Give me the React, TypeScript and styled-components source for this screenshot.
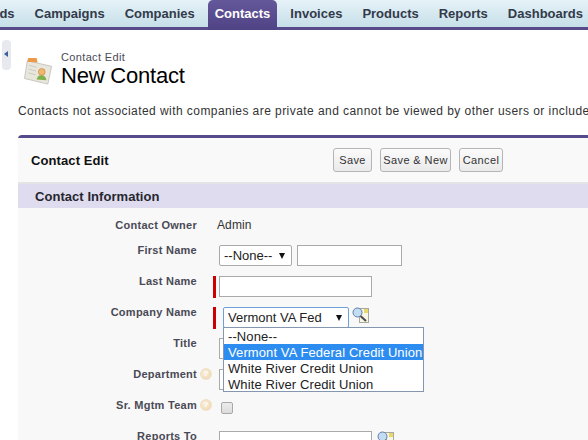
import React from "react";
import styled, { createGlobalStyle } from "styled-components";

const Global = createGlobalStyle`
  html, body { margin: 0; padding: 0; background: #fff; overflow: hidden; }
  body { font-family: "Liberation Sans", Arial, sans-serif; }
`;

const Page = styled.div`
  width: 588px;
  height: 440px;
  overflow: hidden;
  background: #fff;
  color: #222;
`;

const TabBar = styled.nav`
  display: flex;
  gap: 6px;
  height: 27px;
  margin-left: -30px;
  width: 640px;
  background: linear-gradient(#e6f2f8, #c6dfe8);
  border-bottom: 3px solid #574a8a;
`;

const Tab = styled.div<{ $active?: boolean }>`
  height: ${(p) => (p.$active ? "30px" : "27px")};
  padding: 0 7px;
  border-radius: 5px 5px 0 0;
  font-size: 13px;
  font-weight: bold;
  line-height: 27px;
  white-space: nowrap;
  color: ${(p) => (p.$active ? "#fff" : "#333a4a")};
  background: ${(p) => (p.$active ? "linear-gradient(#65589a, #504385)" : "none")};
`;

const Body = styled.main`
  display: flex;
  flex-direction: column;
  padding-left: 18px;
  position: relative;
`;

const Handle = styled.div`
  position: absolute;
  left: 2px;
  top: 10px;
  width: 9px;
  height: 30px;
  border-radius: 4px;
  background: #e7e9ee;
  &::after {
    content: "";
    position: absolute;
    left: 2px;
    top: 11px;
    border: 3px solid transparent;
    border-left: 0;
    border-right: 4px solid #3c5f94;
  }
`;

const TitleRow = styled.header`
  display: flex;
  align-items: flex-start;
  gap: 8px;
  padding: 20px 0 0 6px;
  height: 54px;
  box-sizing: content-box;
`;

const TitleText = styled.div`
  display: flex;
  flex-direction: column;
`;

const Crumb = styled.div`
  font-size: 11px;
  line-height: 14px;
  color: #4a4a56;
  letter-spacing: 0.35px;
`;

const Heading = styled.h1`
  margin: 0;
  font-size: 22px;
  font-weight: normal;
  line-height: 24px;
  color: #000;
  letter-spacing: -0.2px;
`;

const Note = styled.p`
  margin: 0;
  height: 31px;
  font-size: 12px;
  line-height: 14px;
  letter-spacing: 0.44px;
  white-space: nowrap;
  color: #333;
`;

const Panel = styled.section`
  position: relative;
  width: 620px;
  height: 310px;
  background: #f8f8f8;
  border-top: 3px solid #574a8a;
  border-radius: 4px 0 0 0;
`;

const PanelHead = styled.div`
  display: flex;
  align-items: center;
  height: 44px;
  padding-left: 13px;
  border-bottom: 2px solid #e4e4e6;
  background: #f9f9f9;
`;

const PanelTitle = styled.h2`
  margin: 0;
  width: 302px;
  font-size: 13px;
  font-weight: bold;
  letter-spacing: 0.1px;
  color: #111;
`;

const Buttons = styled.div`
  display: flex;
  gap: 8px;
`;

const Button = styled.button<{ $w: number }>`
  width: ${(p) => p.$w}px;
  height: 24px;
  padding: 0;
  font-family: inherit;
  font-size: 11px;
  font-weight: normal;
  letter-spacing: 0.4px;
  color: #333;
  background: linear-gradient(#fbfbfb, #eaeaea);
  border: 1px solid #b5b5b5;
  border-radius: 3px;
`;

const SectionHead = styled.h3`
  margin: 0;
  height: 24px;
  padding-left: 17px;
  background: #e0dcf0;
  font-size: 13px;
  font-weight: bold;
  line-height: 26px;
  letter-spacing: 0.05px;
  color: #26262e;
`;

const Row = styled.div<{ $h?: number }>`
  display: flex;
  align-items: flex-start;
  height: ${(p) => p.$h ?? 31}px;
`;

const Label = styled.label<{ $top?: number }>`
  display: flex;
  justify-content: flex-end;
  align-items: center;
  gap: 3px;
  width: 179px;
  flex: none;
  height: 14px;
  margin-top: ${(p) => p.$top ?? 7}px;
  font-size: 11px;
  font-weight: bold;
  letter-spacing: 0.27px;
  color: #4a4a56;
  white-space: nowrap;
`;

const Help = styled.span`
  flex: none;
  width: 12px;
  height: 12px;
  margin-right: -15px;
  border-radius: 50%;
  background: radial-gradient(circle at 40% 40%, #fbf0dc, #ecd3a8);
  border: 1px solid #efe2cc;
  box-sizing: border-box;
  font-size: 8px;
  line-height: 10px;
  text-align: center;
  color: #fff;
`;

const Value = styled.div`
  margin: 10px 0 0 20px;
  font-size: 12px;
  line-height: 14px;
  letter-spacing: 0.1px;
  color: #333;
`;

const Field = styled.div<{ $required?: boolean }>`
  display: flex;
  align-items: flex-start;
  gap: 3px;
  margin: 9px 0 0 16px;
  &::before {
    content: "";
    flex: none;
    width: 3px;
    height: 22px;
    background: ${(p) => (p.$required ? "#c00" : "transparent")};
  }
`;

const TextInput = styled.div<{ $w: number }>`
  width: ${(p) => p.$w}px;
  height: 21px;
  box-sizing: border-box;
  background: #fff;
  border: 1px solid #aaa;
`;

const SelectBox = styled.div<{ $w: number; $focus?: boolean; $indent?: number }>`
  display: flex;
  align-items: center;
  justify-content: space-between;
  width: ${(p) => p.$w}px;
  height: 21px;
  margin-left: ${(p) => p.$indent ?? 0}px;
  box-sizing: border-box;
  padding: 0 5px 0 4px;
  background: #fff;
  border: 1px solid ${(p) => (p.$focus ? "#6f9fd8" : "#aaa")};
  border-radius: 2px;
  font-size: 13px;
  color: #222;
`;

const Caret = styled.span`
  width: 0;
  height: 0;
  margin-right: 1px;
  border-left: 3.5px solid transparent;
  border-right: 3.5px solid transparent;
  border-top: 6px solid #111;
`;

const Pair = styled.div`
  display: flex;
  gap: 5px;
`;

const Lookup = styled.svg<{ $offset?: number }>`
  flex: none;
  width: 18px;
  height: 17px;
  margin-left: ${(p) => p.$offset ?? 0}px;
`;

const Check = styled.div`
  width: 12px;
  height: 12px;
  margin: 11px 0 0 24px;
  box-sizing: border-box;
  background: linear-gradient(#ececec, #dcdcdc);
  border: 1px solid #a9a9a9;
  border-radius: 2px;
`;

const ListBox = styled.ul`
  position: absolute;
  left: 205px;
  top: 189px;
  width: 201px;
  height: 65px;
  box-sizing: border-box;
  margin: 0;
  padding: 0;
  list-style: none;
  background: #fff;
  border: 1px solid #8496b0;
`;

const Option = styled.li<{ $on?: boolean }>`
  height: 16px;
  padding-left: 4px;
  font-size: 13px;
  line-height: 18px;
  letter-spacing: 0.1px;
  white-space: nowrap;
  color: ${(p) => (p.$on ? "#fff" : "#222")};
  background: ${(p) => (p.$on ? "#2d8cf0" : "transparent")};
`;

const ContactSvg = styled.svg`
  flex: none;
  width: 29px;
  height: 28px;
  margin-top: 7px;
`;

const LookupIcon = ({ offset }: { offset?: number }) => (
  <Lookup $offset={offset} viewBox="0 0 18 17">
    <rect x="7.500" y="1.500" width="9" height="14" fill="#f8f6e4" stroke="#a8a8a0" />
    <rect x="12" y="2" width="4" height="4" fill="#e8d86c" />
    <circle cx="5.500" cy="5.500" r="4.500" fill="#c4dcf2" stroke="#5d7ea8" />
    <path d="M8.500 9l5.500 5" stroke="#4b4b4b" strokeWidth="2" />
  </Lookup>
);

const ContactIcon = () => (
  <ContactSvg viewBox="0 0 30 30">
    <path d="M3 4l26 6-4 19L0 23z" fill="#e9e6dc" stroke="#c4c4c0" />
    <path d="M4 1h9l1 5-11-1z" fill="#ec9a4a" />
    <path d="M5 9l8 2M4.5 13l8 2M4 17l8 2" stroke="#c8c8c4" />
    <circle cx="18.5" cy="16" r="3.6" fill="#eeb870" stroke="#c87830" strokeWidth=".6" />
    <path d="M13 24c1-4 3-4.500 5-4.500s5 1 5.500 5.500z" fill="#7fb04c" />
  </ContactSvg>
);

export default function App() {
  return (
    <Page>
      <Global />
      <TabBar>
        <Tab>Leads</Tab>
        <Tab>Campaigns</Tab>
        <Tab>Companies</Tab>
        <Tab $active>Contacts</Tab>
        <Tab>Invoices</Tab>
        <Tab>Products</Tab>
        <Tab>Reports</Tab>
        <Tab>Dashboards</Tab>
      </TabBar>
      <Body>
        <Handle />
        <TitleRow>
          <ContactIcon />
          <TitleText>
            <Crumb>Contact Edit</Crumb>
            <Heading>New Contact</Heading>
          </TitleText>
        </TitleRow>
        <Note>Contacts not associated with companies are private and cannot be viewed by other users or included in reports.</Note>
        <Panel>
          <PanelHead>
            <PanelTitle>Contact Edit</PanelTitle>
            <Buttons>
              <Button $w={39}>Save</Button>
              <Button $w={71}>Save &amp; New</Button>
              <Button $w={44}>Cancel</Button>
            </Buttons>
          </PanelHead>
          <SectionHead>Contact Information</SectionHead>
          <Row $h={28}>
            <Label $top={10}>Contact Owner</Label>
            <Value>Admin</Value>
          </Row>
          <Row>
            <Label>First Name</Label>
            <Field>
              <Pair>
                <SelectBox $w={73}>--None--<Caret /></SelectBox>
                <TextInput $w={105} />
              </Pair>
            </Field>
          </Row>
          <Row>
            <Label>Last Name</Label>
            <Field $required>
              <TextInput $w={153} />
            </Field>
          </Row>
          <Row>
            <Label>Company Name</Label>
            <Field $required>
              <SelectBox $w={126} $indent={4} $focus>Vermont VA Fed<Caret /></SelectBox>
              <LookupIcon />
            </Field>
          </Row>
          <Row>
            <Label>Title</Label>
            <Field>
              <TextInput $w={153} />
            </Field>
          </Row>
          <Row>
            <Label>Department<Help>?</Help></Label>
            <Field>
              <TextInput $w={153} />
            </Field>
          </Row>
          <Row>
            <Label>Sr. Mgtm Team<Help>?</Help></Label>
            <Check />
          </Row>
          <Row>
            <Label>Reports To</Label>
            <Field>
              <TextInput $w={153} />
              <LookupIcon offset={2} />
            </Field>
          </Row>
          <ListBox>
            <Option>--None--</Option>
            <Option $on>Vermont VA Federal Credit Union</Option>
            <Option>White River Credit Union</Option>
            <Option>White River Credit Union</Option>
          </ListBox>
        </Panel>
      </Body>
    </Page>
  );
}
